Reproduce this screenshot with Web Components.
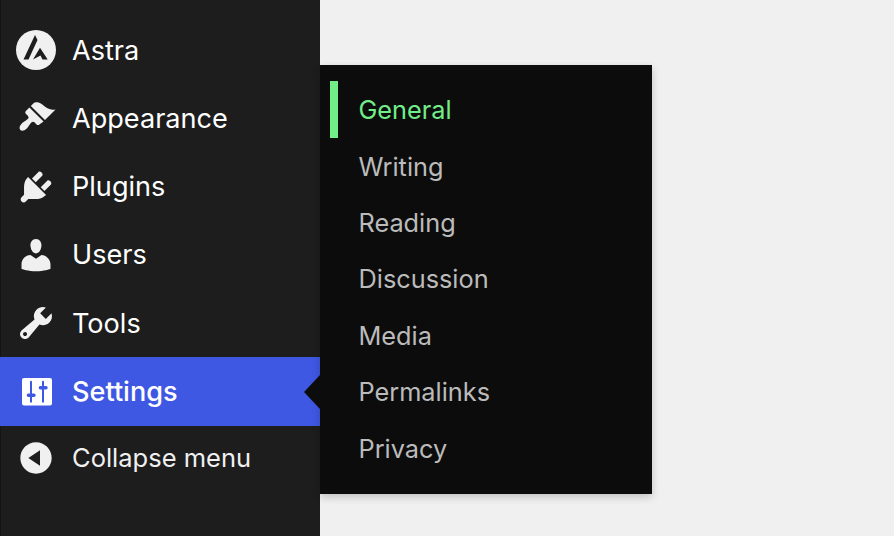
<!DOCTYPE html>
<html>
<head>
<meta charset="utf-8">
<title>Settings menu</title>
<style>
  html, body { margin: 0; height: 100%; }
  body { background: #f0f0f1; font-family: Inter, "Liberation Sans", sans-serif; overflow: hidden; }
</style>
</head>
<body>
<admin-menu>
  <menu-row>
    <svg slot="icon" viewBox="0 0 40 40"><circle cx="20" cy="20" r="20" fill="#f0f0f1"/><path d="M19 5 21.500 10 12.500 29.500H7.500zM24 17.700 31.700 29.500H26.500L24.500 25.500 17 29.500z" fill="#1d1d1d"/></svg>
    Astra
  </menu-row>
  <menu-row>
    <svg slot="icon" viewBox="0 0 20 20"><path d="M14.480 11.060 7.410 3.990l1.500-1.500c.5-.56 2.300-.47 3.510.32 1.210.8 1.430 1.280 2.910 2.100 1.180.64 2.450 1.260 4.450.85zm-.71.71L6.700 4.700 4.930 6.470c-.39.39-.39 1.020 0 1.410l1.060 1.060c.39.39.39 1.030 0 1.420-.6.6-1.430 1.110-2.210 1.690-.35.26-.7.53-1.010.84-1.030 1.030-1.300 2.400-.6 3.100.7.7 2.070.43 3.100-.6.31-.31.58-.66.84-1.010.58-.78 1.090-1.610 1.690-2.210.39-.39 1.030-.39 1.420 0l1.060 1.060c.39.39 1.020.39 1.410 0z"/></svg>
    Appearance
  </menu-row>
  <menu-row>
    <svg slot="icon" viewBox="0 0 20 20"><path d="M13.110 4.360 9.870 7.600 8 5.730l3.240-3.240c.35-.34 1.050-.2 1.560.32.52.51.66 1.210.31 1.550zm-8 1.770.91-1.120 9.010 9.010-1.190.84c-.71.71-2.630 1.160-3.820 1.160H6.140L4.900 17.260c-.59.59-1.540.59-2.120 0-.59-.58-.59-1.530 0-2.120l1.240-1.240v-3.880c0-1.130.4-3.190 1.090-3.890zm7.260 3.970 3.240-3.240c.34-.35 1.040-.21 1.550.31.52.51.66 1.210.31 1.550l-3.240 3.250z"/></svg>
    Plugins
  </menu-row>
  <menu-row>
    <svg slot="icon" viewBox="0 0 20 20"><path d="M10 9.250c-2.270 0-2.730-3.440-2.730-3.440C7 4.020 7.820 2 9.970 2c2.160 0 2.980 2.020 2.710 3.810 0 0-.41 3.440-2.680 3.440zm0 2.570L12.720 10c2.390 0 4.520 2.330 4.520 4.530v2.490s-3.650 1.130-7.240 1.130c-3.650 0-7.240-1.130-7.240-1.130v-2.490c0-2.250 1.940-4.480 4.470-4.480z"/></svg>
    Users
  </menu-row>
  <menu-row>
    <svg slot="icon" viewBox="0 0 20 20"><path d="M16.680 9.770c-1.340 1.340-3.300 1.670-4.950.99l-5.410 6.520c-.99.99-2.590.99-3.580 0s-.99-2.590 0-3.570l6.520-5.420c-.68-1.650-.35-3.610.99-4.950 1.280-1.280 3.120-1.620 4.720-1.060l-2.890 2.890 2.820 2.820 2.860-2.870c.53 1.580.18 3.390-1.080 4.650zM3.810 16.210c.4.39 1.040.39 1.430 0 .4-.4.4-1.040 0-1.430-.39-.4-1.030-.4-1.430 0-.39.39-.39 1.030 0 1.430z"/></svg>
    Tools
  </menu-row>
  <menu-row current>
    <svg slot="icon" viewBox="0 0 40 40"><rect x="6" y="6" width="30" height="27.500" rx="2" fill="#fff"/><path d="M15 9.700V29.700M27 9.700V29.700" stroke="#3f58e3" stroke-width="2" stroke-linecap="round"/><path d="M12.400 23.300H18M24.400 15.700H30" stroke="#3f58e3" stroke-width="3.400" stroke-linecap="round"/></svg>
    Settings
  </menu-row>
  <menu-row short>
    <svg slot="icon" viewBox="0 0 20 20"><path d="M10 2.160c4.330 0 7.840 3.510 7.840 7.840s-3.510 7.840-7.840 7.840S2.160 14.330 2.160 10 5.710 2.160 10 2.160zm2 11.720V6.120L6.180 9.970z"/></svg>
    Collapse menu
  </menu-row>
  <fly-menu slot="flyout">
    <fly-item active>General</fly-item>
    <fly-item>Writing</fly-item>
    <fly-item>Reading</fly-item>
    <fly-item>Discussion</fly-item>
    <fly-item>Media</fly-item>
    <fly-item>Permalinks</fly-item>
    <fly-item>Privacy</fly-item>
  </fly-menu>
</admin-menu>

<script>
class AdminMenu extends HTMLElement {
  constructor() {
    super();
    this.attachShadow({ mode: 'open' });
    this.shadowRoot.innerHTML = `
      <style>
        :host {
          display: block;
          position: relative;
          box-sizing: border-box;
          width: 320px;
          height: 536px;
          padding-top: 16px;
          background: #1d1d1d;
          border-left: 1px solid #141414;
        }
        .rows { margin-left: -1px; }
      </style>
      <div class="rows"><slot></slot></div>
      <slot name="flyout"></slot>
    `;
  }
}

class MenuRow extends HTMLElement {
  constructor() {
    super();
    this.attachShadow({ mode: 'open' });
    this.shadowRoot.innerHTML = `
      <style>
        :host {
          display: flex;
          align-items: center;
          box-sizing: border-box;
          height: 68.29px;
          padding-left: 16px;
          color: #fff;
          font-size: 27.1px;
          font-weight: 400;
        }
        :host([current]) { background: #3f58e3; font-weight: 500; }
        :host([short]) { height: 64.6px; color: #f0f0f1; font-size: 25.5px; }
        .icon {
          flex: none;
          display: flex;
          width: 40px;
          height: 40px;
          margin-right: 16px;
        }
        ::slotted(svg) { flex: none; width: 40px; height: 40px; fill: #f0f0f1; }
      </style>
      <span class="icon"><slot name="icon"></slot></span>
      <slot></slot>
    `;
  }
}

class FlyMenu extends HTMLElement {
  constructor() {
    super();
    this.attachShadow({ mode: 'open' });
    this.shadowRoot.innerHTML = `
      <style>
        :host {
          display: block;
          position: absolute;
          left: 319px;
          top: 65px;
          box-sizing: border-box;
          width: 332px;
          height: 429px;
          padding: 16px 0 0 10px;
          background: #0c0c0c;
          box-shadow: 0 3px 8px rgba(0, 0, 0, 0.2);
        }
        .arrow {
          position: absolute;
          left: -16px;
          top: 310px;
          width: 0;
          height: 0;
          border-style: solid;
          border-width: 17px 16px 17px 0;
          border-color: transparent #0c0c0c transparent transparent;
        }
      </style>
      <span class="arrow"></span>
      <slot></slot>
    `;
  }
}

class FlyItem extends HTMLElement {
  constructor() {
    super();
    this.attachShadow({ mode: 'open' });
    this.shadowRoot.innerHTML = `
      <style>
        :host {
          display: flex;
          align-items: center;
          box-sizing: border-box;
          height: 56.45px;
          padding-left: 20.5px;
          border-left: 8px solid transparent;
          color: #bbbbbb;
          font-size: 25.3px;
          font-weight: 400;
        }
        :host([active]) { height: 56.8px; color: #72ee88; border-left-color: #72ee88; }
      </style>
      <slot></slot>
    `;
  }
}

customElements.define('admin-menu', AdminMenu);
customElements.define('menu-row', MenuRow);
customElements.define('fly-menu', FlyMenu);
customElements.define('fly-item', FlyItem);
</script>
</body>
</html>
